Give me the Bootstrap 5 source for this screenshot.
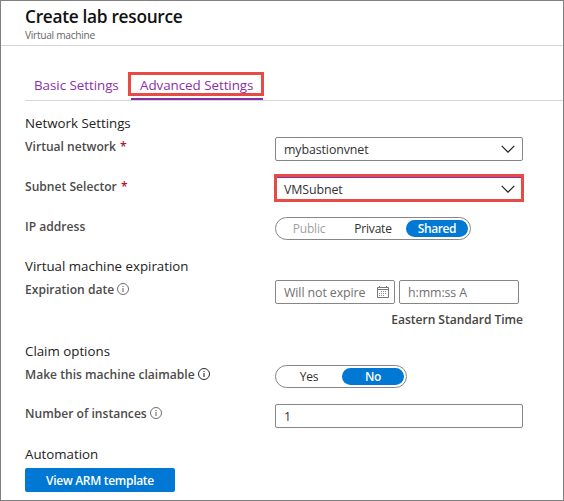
<!DOCTYPE html>
<html lang="en">
<head>
<meta charset="utf-8">
<meta name="viewport" content="width=device-width, initial-scale=1">
<title>Create lab resource</title>
<link href="https://cdn.jsdelivr.net/npm/bootstrap@5.3.0/dist/css/bootstrap.min.css" rel="stylesheet">
<style>
body{font-family:"Open Sans","Noto Sans",sans-serif;font-size:12.2px;color:#323130;background:#fff;overflow:hidden}
.frame{width:564px;height:501px;border:1px solid #808080}
.head{height:45px;padding:4px 0 0 24px;border-bottom:1px solid #d6d6d6}
.head h1{font-size:17.3px;line-height:24px;font-weight:600;color:#111;letter-spacing:-.3px}
.head p{font-size:10.2px;line-height:12px;color:#666;letter-spacing:-.3px}
.tabs{margin:26px 0 0 24px;height:29px;gap:4px;border-bottom:1px solid #d6d6d6!important}
.tabs .nav-link{font-size:13.4px;line-height:20px;padding:3px 0 0 9px;height:28px;color:#8c2fa8;width:102px;letter-spacing:-.05px;border:0;border-radius:0;background:none;white-space:nowrap}
.tabs .nav-link.active{width:132px;border-bottom:2px solid #8a2da5}
.callout{position:absolute;border:3px solid #e84a46;pointer-events:none}
.callout-tab{left:-3px;top:0;width:136px;height:24px}
.callout-field{left:-1px;top:-3px;width:250px;height:28px}
.form-area{padding:12px 0 0 24px}
.sec{font-size:13.3px;line-height:20px;margin:0 0 4px;font-weight:400;color:#222}
.field{height:40px}
.field-s{height:39px}
.field-l{height:61px}
.lbl{width:250px;line-height:19px;font-size:12.1px;font-weight:600;white-space:nowrap;color:#4c4b4a}
.req{color:#b3152d;margin-left:1px}
.ctl{width:248px}
.box{height:24px;border:1px solid #868686;border-radius:2px;padding:0 8px;font-size:12.4px;letter-spacing:-.1px;white-space:nowrap;line-height:23px}
.box-focus{border-color:#8a2da5}
.half{width:120px;color:#707070;padding-right:5px}
.zone{line-height:18px;font-size:12.1px;font-weight:600;margin-top:7px;color:#464544;letter-spacing:-.05px}
.pill{height:23px;border:1px solid #868686;border-radius:12px;padding:2px;width:196px;gap:2px;font-size:12px;letter-spacing:-.2px}
.pill-2{width:132px}
.pill span{flex:1;text-align:center;border-radius:9px;line-height:17px;height:17px}
.pill .on{background:#0078d4;color:#fff;font-weight:600;flex:0 0 62px;letter-spacing:-.4px}
.off{color:#a19f9d}
.arm{width:150px;height:24px;border:0;border-radius:2px;padding:0;background:#0078d4;color:#fff;font-size:12px;line-height:23px;font-weight:600;letter-spacing:-.3px}
.arm:hover{background:#106ebe;color:#fff}
.info{width:12px;height:12px;margin-left:3px;margin-top:3px;color:#605e5c}
.info-dark{color:#111}
.chev{width:14px;height:8px;margin-right:-1px}
</style>
<script src="https://cdn.jsdelivr.net/npm/bootstrap@5.3.0/dist/js/bootstrap.bundle.min.js"></script>
</head>
<body>
<svg class="d-none">
<symbol id="i-info" viewBox="0 0 12 12"><circle cx="6" cy="6" r="5.5" fill="none" stroke="currentColor" stroke-width=".9"/><path d="M6 5v4M6 3v1" stroke="currentColor" fill="none"/></symbol>
<symbol id="i-chev" viewBox="0 0 14 8"><path d="M.7.9L7 7.2 13.3.9" fill="none" stroke="#222" stroke-width="1.2"/></symbol>
<symbol id="i-cal" viewBox="0 0 12 12"><path d="M.5 1.5h11v10H.5zM.5 3.5h11M2.5 0v2M9.5 0v2" fill="none" stroke="#777"/><path d="M4 5.5h6M2 7.5h8M2 9.5h6" fill="none" stroke="#888" stroke-dasharray="1 1"/></symbol>
</svg>
<main class="frame">
<header class="head"><h1 class="m-0">Create lab resource</h1><p class="m-0">Virtual machine</p></header>
<ul class="nav tabs">
<li class="nav-item"><a class="nav-link">Basic Settings</a></li>
<li class="nav-item position-relative"><a class="nav-link active">Advanced Settings</a><div class="callout callout-tab"></div></li>
</ul>
<form class="form-area">
<h2 class="sec">Network Settings</h2>
<div class="d-flex field">
<label class="lbl">Virtual network <span class="req">*</span></label>
<div class="ctl"><div class="box d-flex justify-content-between align-items-center"><span>mybastionvnet</span><svg class="chev"><use href="#i-chev"/></svg></div></div>
</div>
<div class="d-flex field">
<label class="lbl">Subnet Selector <span class="req">*</span></label>
<div class="ctl position-relative"><div class="box box-focus d-flex justify-content-between align-items-center"><span>VMSubnet</span><svg class="chev"><use href="#i-chev"/></svg></div><div class="callout callout-field"></div></div>
</div>
<div class="d-flex field-s">
<label class="lbl">IP address</label>
<div class="pill d-flex"><span class="off">Public</span><span>Private</span><span class="on">Shared</span></div>
</div>
<h2 class="sec">Virtual machine expiration</h2>
<div class="d-flex field-l">
<label class="lbl d-flex">Expiration date<svg class="info"><use href="#i-info"/></svg></label>
<div class="ctl">
<div class="d-flex gap-1"><div class="box half d-flex justify-content-between align-items-center"><span>Will not expire</span><svg width="12" height="12"><use href="#i-cal"/></svg></div><div class="box half">h:mm:ss A</div></div>
<div class="zone text-end">Eastern Standard Time</div>
</div>
</div>
<h2 class="sec">Claim options</h2>
<div class="d-flex field-s">
<label class="lbl d-flex">Make this machine claimable<svg class="info info-dark"><use href="#i-info"/></svg></label>
<div class="pill pill-2 d-flex"><span>Yes</span><span class="on">No</span></div>
</div>
<div class="d-flex field">
<label class="lbl d-flex">Number of instances<svg class="info"><use href="#i-info"/></svg></label>
<div class="ctl"><div class="box">1</div></div>
</div>
<h2 class="sec">Automation</h2>
<button class="btn arm d-block" type="button">View ARM template</button>
</form>
</main>
</body>
</html>
